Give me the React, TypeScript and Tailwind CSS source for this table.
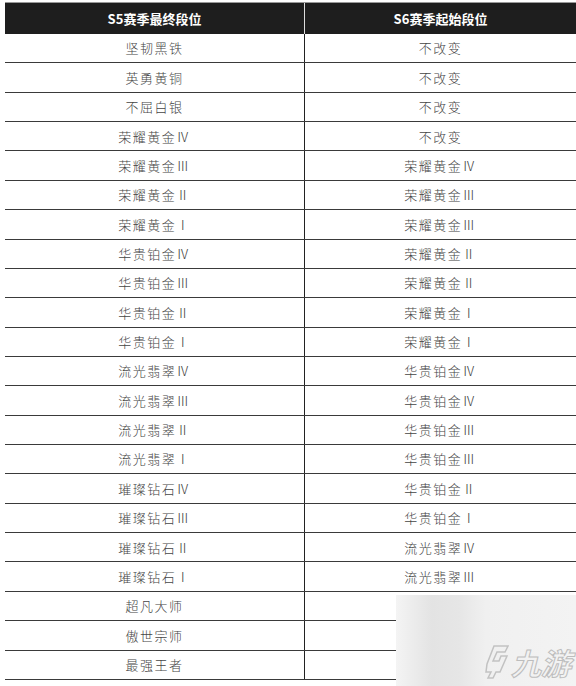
const rows: [string, string][] = [
  ["坚韧黑铁", "不改变"],
  ["英勇黄铜", "不改变"],
  ["不屈白银", "不改变"],
  ["荣耀黄金Ⅳ", "不改变"],
  ["荣耀黄金Ⅲ", "荣耀黄金Ⅳ"],
  ["荣耀黄金Ⅱ", "荣耀黄金Ⅲ"],
  ["荣耀黄金Ⅰ", "荣耀黄金Ⅲ"],
  ["华贵铂金Ⅳ", "荣耀黄金Ⅱ"],
  ["华贵铂金Ⅲ", "荣耀黄金Ⅱ"],
  ["华贵铂金Ⅱ", "荣耀黄金Ⅰ"],
  ["华贵铂金Ⅰ", "荣耀黄金Ⅰ"],
  ["流光翡翠Ⅳ", "华贵铂金Ⅳ"],
  ["流光翡翠Ⅲ", "华贵铂金Ⅳ"],
  ["流光翡翠Ⅱ", "华贵铂金Ⅲ"],
  ["流光翡翠Ⅰ", "华贵铂金Ⅲ"],
  ["璀璨钻石Ⅳ", "华贵铂金Ⅱ"],
  ["璀璨钻石Ⅲ", "华贵铂金Ⅰ"],
  ["璀璨钻石Ⅱ", "流光翡翠Ⅳ"],
  ["璀璨钻石Ⅰ", "流光翡翠Ⅲ"],
  ["超凡大师", ""],
  ["傲世宗师", ""],
  ["最强王者", ""],
];

function Watermark() {
  return (
    <div className="absolute left-[396px] top-[595px] h-[91px] w-[180px] bg-[linear-gradient(90deg,#f4f4f4_0%,#e3e3e3_20%,#e6e6e6_35%,#f0f0f0_50%,#f3f3f3_100%)]">
      <div className="absolute left-[89px] top-[49px] flex items-center gap-[2px]">
        <svg width="24" height="36" viewBox="0 0 24 36" fill="none" stroke="#c2c2c2" strokeWidth="1.5">
          <path d="M9 2 L23 2 L20 8 L12 8 L8 17 L14 17 L16 12 L22 12 L15 28 L11 28 L8 34 L3 34 L6 28 L1 28 L2 20 Z" />
        </svg>
        <span className="text-[30px] font-bold italic leading-none text-transparent [-webkit-text-stroke:1px_#bdbdbd] font-['Noto_Sans_CJK_SC',sans-serif]">
          九游
        </span>
      </div>
    </div>
  );
}

export default function App() {
  return (
    <div className="relative h-[686px] w-[576px] overflow-hidden bg-white font-['Noto_Sans_CJK_SC','Noto_Sans',sans-serif]">
      <div className="ml-[5px] mt-[2px] w-[571px]">
        <div className="grid h-[32px] grid-cols-[300px_1fr] border-t border-[#999] bg-[#1e1e1e] text-[13px] font-bold text-white">
          <div className="flex items-center justify-center border-r border-[#ddd]">S5赛季最终段位</div>
          <div className="flex items-center justify-center">S6赛季起始段位</div>
        </div>
        {rows.map(([a, b], i) => (
          <div
            key={i}
            className="grid h-[29.36px] grid-cols-[300px_1fr] border-b border-[#3a3a3a] text-[13px] font-light tracking-[1.5px] text-[#444]"
          >
            <div className="flex items-center justify-center border-r border-[#222]">{a}</div>
            <div className="flex items-center justify-center">{b}</div>
          </div>
        ))}
      </div>
      <Watermark />
    </div>
  );
}
